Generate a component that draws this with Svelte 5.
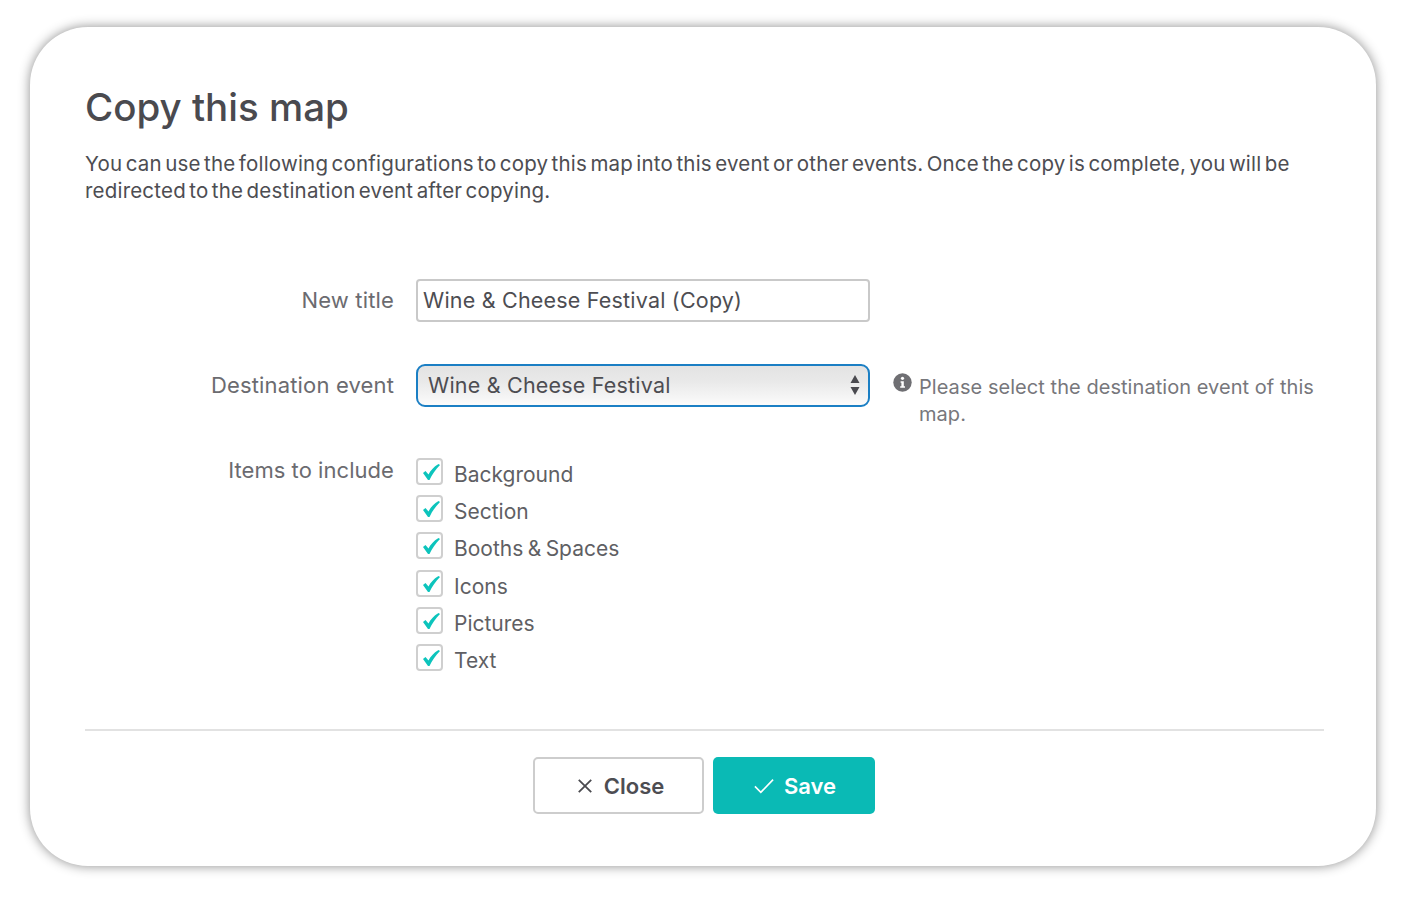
<script>
  const items = ["Background", "Section", "Booths & Spaces", "Icons", "Pictures", "Text"];
  let title = "Wine & Cheese Festival (Copy)";
</script>

<main>
  <section class="card">
    <h1>Copy this map</h1>
    <p class="intro">You can use the following configurations to copy this map into this event or other events. Once the copy is complete, you will be redirected to the destination event after copying.</p>

    <div class="form">
      <div class="row first">
        <label for="title">New title</label>
        <input id="title" type="text" bind:value={title} />
      </div>

      <div class="row second">
        <label for="dest">Destination event</label>
        <div class="select">
          <select id="dest">
            <option>Wine &amp; Cheese Festival</option>
          </select>
          <svg class="arrows" width="10" height="22" viewBox="0 0 10 22">
            <path d="M5 1 L9.5 9 H0.5 Z M5 21 L0.5 13 H9.5 Z" fill="#4a4a4f" />
          </svg>
        </div>
        <div class="help">
          <svg width="19" height="19" viewBox="0 0 19 19">
            <circle cx="9.5" cy="9.5" r="9.2" fill="#6f6f73" />
            <circle cx="9.5" cy="5.3" r="1.6" fill="#fff" />
            <path d="M7.6 8.2 H10.8 V13.2 H12 V14.8 H7.2 V13.2 H8.4 V9.8 H7.6 Z" fill="#fff" />
          </svg>
          <span>Please select the destination event of this map.</span>
        </div>
      </div>

      <div class="row third">
        <div class="lbl">Items to include</div>
        <ul>
          {#each items as item}
            <li>
              <span class="box">
                <svg width="23" height="23" viewBox="-2.5 -3 23 23">
                  <path d="M2.5 10 L5 8 L8 11.5 C10 7.5 13 4 18 1 L19.5 2 C15 6.5 11.5 11.5 9 17 L7.5 17 Z" fill="#0cc4bc" />
                </svg>
              </span>
              <span class="name">{item}</span>
            </li>
          {/each}
        </ul>
      </div>
    </div>

    <footer>
      <button class="close">
        <svg width="16" height="16" viewBox="0 0 18 18">
          <path d="M2 2 L16 16 M16 2 L2 16" stroke="#4a4a4f" stroke-width="2" fill="none" />
        </svg>
        Close
      </button>
      <button class="save">
        <svg width="20" height="17" viewBox="0 0 22 18">
          <path d="M1 10 L7.5 16.5 L21 2.5" stroke="#fff" stroke-width="1.8" fill="none" />
        </svg>
        Save
      </button>
    </footer>
  </section>
</main>

<style>
:global(body) {
  background: #fff;
  font-family: "Inter", "Liberation Sans", sans-serif;
  color: #4d4d52;
}

main {
  padding: 27px 30px 36px;
}

.card {
  box-sizing: border-box;
  height: 839px;
  padding: 57px 52px 0 55px;
  background: #fff;
  border-radius: 58px;
  box-shadow: 0 0 12px rgba(0, 0, 0, 0.45);
}

h1 {
  margin: 0;
  font-size: 38.5px;
  line-height: 46px;
  font-weight: 500;
  letter-spacing: 0;
  color: #4a4a4f;
}

.intro {
  margin: 20px 0 0;
  font-size: 20.5px;
  line-height: 27px;
  letter-spacing: 0.2px;
  word-spacing: -2.6px;
  color: #4d4d52;
}

.form {
  margin-top: 75px;
}

.row {
  display: grid;
  grid-template-columns: 309px 454px 1fr;
  column-gap: 22px;
}

.first {
  height: 85px;
}

.second {
  height: 94px;
}

label, .lbl {
  text-align: right;
  font-size: 22px;
  letter-spacing: 0.15px;
  color: #6b6b70;
}

label {
  line-height: 43px;
}

.lbl {
  line-height: 24px;
  letter-spacing: 0.05px;
}

input {
  box-sizing: border-box;
  width: 454px;
  height: 43px;
  padding: 0 5px 2px;
  border: 2px solid #c9c9c9;
  border-radius: 4px;
  background: #fff;
  font: 21.5px "Inter", sans-serif;
  letter-spacing: 0.2px;
  color: #4d4d52;
  outline: none;
}

.select {
  position: relative;
  width: 454px;
  height: 43px;
}

select {
  box-sizing: border-box;
  width: 100%;
  height: 100%;
  padding: 0 10px 2px;
  border: 2px solid #1b7fc4;
  border-radius: 9px;
  background: linear-gradient(#e3e3e3, #e9e9e9 40%, #fbfbfb);
  appearance: none;
  font: 21.5px "Inter", sans-serif;
  letter-spacing: 0.2px;
  color: #4d4d52;
  outline: none;
}

.arrows {
  position: absolute;
  right: 10px;
  top: 10px;
}

.help {
  display: flex;
  gap: 7px;
  align-items: flex-start;
  margin-left: 1px;
  font-size: 20px;
  line-height: 27px;
  letter-spacing: 0.05px;
  color: #77777c;
}

.help svg {
  flex: none;
  margin-top: 9px;
}

.help span {
  margin-top: 10px;
}

ul {
  margin: -2px 0 0;
  padding: 0;
  list-style: none;
}

li {
  display: flex;
  align-items: center;
  height: 37.2px;
  gap: 11px;
}

.box {
  box-sizing: border-box;
  display: flex;
  align-items: center;
  justify-content: center;
  width: 27px;
  height: 27px;
  margin-top: -6px;
  border: 2px solid #cfcfcf;
  border-radius: 4px;
}

.name {
  font-size: 21px;
  word-spacing: -1.5px;
  color: #5f5f64;
}

footer {
  display: flex;
  justify-content: center;
  gap: 9px;
  margin-top: 50px;
  padding: 26px 2px 0 0;
  border-top: 2px solid #e2e2e2;
}

button {
  box-sizing: border-box;
  display: flex;
  align-items: center;
  justify-content: center;
  gap: 10px;
  height: 57px;
  border-radius: 5px;
  font: 600 22px "Inter", sans-serif;
}

.close {
  width: 171px;
  gap: 11px;
  padding: 0 0 0 5px;
  background: #fff;
  border: 2px solid #cdcdcd;
  color: #4d4d52;
}

.save {
  width: 162px;
  padding: 0 0 0 3px;
  background: #0abab5;
  border: none;
  color: #fff;
}
</style>
